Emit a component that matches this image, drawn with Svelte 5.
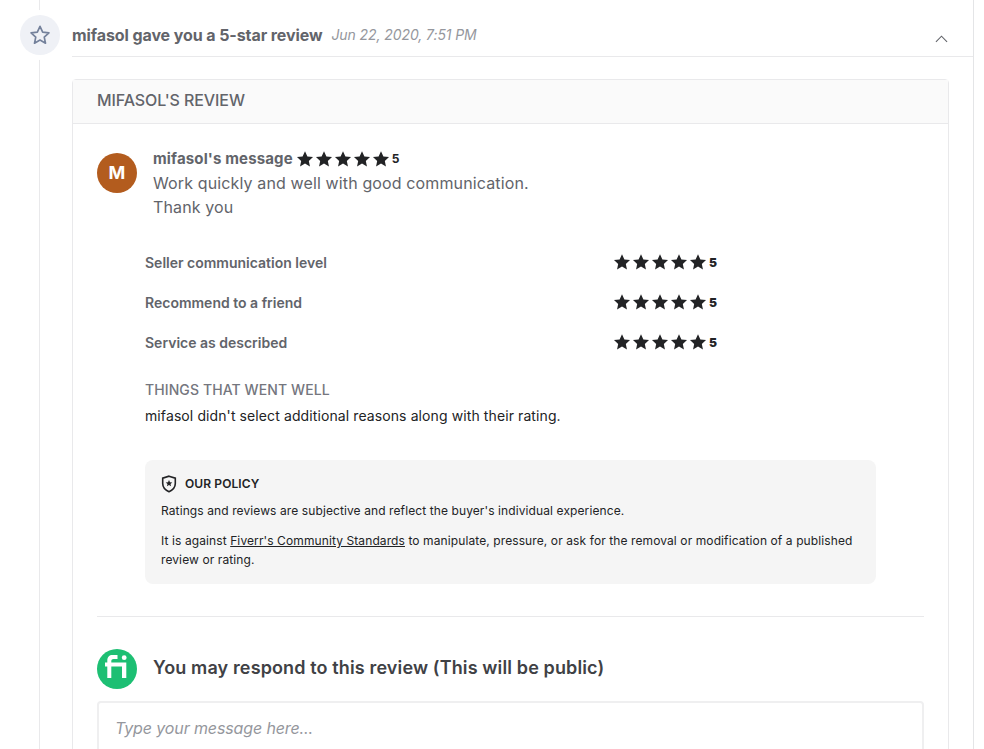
<script lang="ts">
  const ratings = [
    "Seller communication level",
    "Recommend to a friend",
    "Service as described",
  ];
  const star =
    "M12 1.6l3.2 6.9 7.5.9-5.6 5.1 1.5 7.4L12 18.1l-6.6 3.8 1.5-7.4L1.3 9.4l7.5-.9z";
</script>

{#snippet stars(size)}
  <span class="stars">
    {#each [1, 2, 3, 4, 5] as n (n)}
      <svg viewBox="0 0 24 24" width={size} height={size}><path d={star} fill="#222325" /></svg>
    {/each}
    <b>5</b>
  </span>
{/snippet}

<div class="page">
  <div class="activity">
    <header class="head">
      <div class="badge">
        <svg viewBox="0 0 24 24" width="20" height="20">
          <path d={star} fill="none" stroke="#74819b" stroke-width="2" stroke-linejoin="round" />
        </svg>
      </div>
      <div class="title">
        <strong>mifasol gave you a 5-star review</strong>
        <em>Jun 22, 2020, 7:51 PM</em>
        <svg class="chevron" viewBox="0 0 14 8" width="13" height="8">
          <path d="M1 7l6-6 6 6" fill="none" stroke="#62646a" stroke-width="1.2" />
        </svg>
      </div>
    </header>

    <section class="card">
      <h2>MIFASOL'S REVIEW</h2>
      <div class="body">
        <div class="message">
          <div class="avatar">M</div>
          <div>
            <div class="from"><strong>mifasol's message</strong> {@render stars(18)}</div>
            <p>Work quickly and well with good communication.<br />Thank you</p>
          </div>
        </div>

        <div class="details">
          <ul>
            {#each ratings as label (label)}
              <li><span>{label}</span><span class="row-stars">{@render stars(18)}</span></li>
            {/each}
          </ul>
          <h3>THINGS THAT WENT WELL</h3>
          <p class="reasons">mifasol didn't select additional reasons along with their rating.</p>

          <div class="policy">
            <h4>
              <svg viewBox="0 0 16 18" width="16" height="18">
                <path d="M8 1.200l6.300 2v5.300c0 3.700-2.500 6.500-6.300 8.200-3.800-1.700-6.300-4.500-6.300-8.200V3.200z" fill="none" stroke="#222325" stroke-width="1.6" />
                <path d="M8 5l1 2.200 2.300.2-1.800 1.500.6 2.300-2.100-1.200-2.100 1.200.6-2.300-1.800-1.500L7 7.200z" fill="#222325" />
              </svg>
              OUR POLICY
            </h4>
            <p>Ratings and reviews are subjective and reflect the buyer's individual experience.</p>
            <p>It is against <u>Fiverr's Community Standards</u> to manipulate, pressure, or ask for the removal or modification of a published review or rating.</p>
          </div>
        </div>

        <div class="respond">
          <div class="logo">
            <svg viewBox="0 0 40 40" width="40" height="40">
              <circle cx="20" cy="20" r="20" fill="#1dbf73" />
              <path d="M10.300 29V17.500H8v-4h2.300V11.500C10.300 8 12.300 6 15.500 6H20.500v4h-4c-1.300 0-2.200.7-2.200 2v1.500H29.300V29h-4.300V17.500H14.300V29z" fill="#fff" />
              <circle cx="27.200" cy="8.700" r="2.400" fill="#fff" />
            </svg>
          </div>
          <h3>You may respond to this review (This will be public)</h3>
        </div>
        <div class="input">Type your message here...</div>
      </div>
    </section>
  </div>
</div>

<style>
  :global(body) {
    background: #fff;
  }

  .page {
    box-sizing: border-box;
    width: 974px;
    height: 749px;
    overflow: hidden;
    border-right: 1px solid #e4e5e7;
    font-family: Inter, "Liberation Sans", sans-serif;
    color: #62646a;
    padding: 15px 0 0 20px;
    position: relative;
  }

  .page::before {
    content: "";
    position: absolute;
    left: 39px;
    top: 0;
    bottom: 0;
    width: 1px;
    background: #e9e9eb;
  }

  .head {
    display: flex;
    gap: 12px;
    position: relative;
  }

  .badge {
    width: 40px;
    height: 40px;
    border-radius: 50%;
    background: #eff1f6;
    box-shadow: 0 0 0 5px #fff;
    display: flex;
    align-items: center;
    justify-content: center;
    flex: none;
    position: relative;
  }

  .title {
    flex: 1;
    height: 42px;
    border-bottom: 1px solid #e9e9eb;
    display: flex;
    align-items: flex-start;
    padding-top: 11px;
    box-sizing: border-box;
    gap: 9px;
    font-size: 16px;
    line-height: 18px;
    letter-spacing: -0.09px;
    white-space: nowrap;
  }

  .title em {
    font-size: 14px;
    color: #95979d;
  }

  .chevron {
    margin: 9px 25px 0 auto;
  }

  .card {
    margin: 22px 24px 0 52px;
    border: 1px solid #e9e9eb;
    border-radius: 4px;
  }

  h2 {
    margin: 0;
    height: 44px;
    line-height: 41px;
    padding-left: 24px;
    font-size: 16px;
    font-weight: 500;
    letter-spacing: -0.1px;
    background: #fafafa;
    border-bottom: 1px solid #e9e9eb;
    box-sizing: border-box;
  }

  .body {
    padding: 25px 24px 0;
  }

  .message {
    display: flex;
    gap: 16px;
  }

  .avatar {
    width: 40px;
    height: 40px;
    margin-top: 4px;
    flex: none;
    border-radius: 50%;
    background: #b35c1e;
    color: #fff;
    font-size: 18px;
    font-weight: 700;
    line-height: 40px;
    text-align: center;
  }

  .from {
    display: flex;
    align-items: center;
    gap: 3px;
    height: 22px;
    margin-top: -1px;
    margin-bottom: 1px;
    font-size: 15px;
    line-height: 22px;
    letter-spacing: 0.15px;
  }

  .message p {
    margin: 0;
    font-size: 16px;
    line-height: 24px;
    letter-spacing: 0.13px;
  }

  .stars {
    display: inline-flex;
    align-items: center;
    gap: 1px;
    white-space: nowrap;
  }

  .stars b {
    margin-left: 1px;
    font-size: 12px;
    color: #222325;
  }

  .details {
    margin: 23px 48px 0;
  }

  ul {
    list-style: none;
    margin: 0;
    padding: 0;
  }

  li {
    display: grid;
    grid-template-columns: 468px auto;
    justify-content: start;
    align-items: center;
    height: 40px;
    font-size: 14px;
    font-weight: 600;
  }

  .row-stars {
    display: flex;
  }

  .details > h3 {
    margin: 18px 0 0;
    font-size: 14px;
    font-weight: 500;
    line-height: 20px;
    letter-spacing: 0.1px;
    color: #74767e;
  }

  .reasons {
    margin: 6px 0 0;
    font-size: 14px;
    line-height: 20px;
    letter-spacing: 0.1px;
    color: #222325;
  }

  .policy {
    margin-top: 34px;
    padding: 14px 16px 15px;
    background: #f5f5f5;
    border-radius: 8px;
    color: #222325;
    font-size: 12px;
    line-height: 19px;
    letter-spacing: 0.1px;
  }

  h4 {
    display: flex;
    align-items: center;
    gap: 8px;
    margin: 0 0 8px;
    font-size: 12px;
    font-weight: 600;
  }

  .policy p {
    margin: 0 0 11px;
  }

  .policy p:last-child {
    margin: 0;
  }

  .respond {
    margin-top: 32px;
    padding-top: 32px;
    border-top: 1px solid #e9e9eb;
    display: flex;
    align-items: center;
    gap: 16px;
  }

  .logo {
    height: 40px;
  }

  .respond h3 {
    margin: 0 0 4px;
    font-size: 18px;
    font-weight: 600;
    letter-spacing: 0.13px;
    color: #404145;
  }

  .input {
    margin-top: 12px;
    height: 120px;
    padding: 14px 16px;
    border: 2px solid #efeff0;
    border-radius: 4px;
    font-size: 16px;
    font-style: italic;
    line-height: 22px;
    letter-spacing: -0.12px;
    color: #95979d;
  }
</style>
